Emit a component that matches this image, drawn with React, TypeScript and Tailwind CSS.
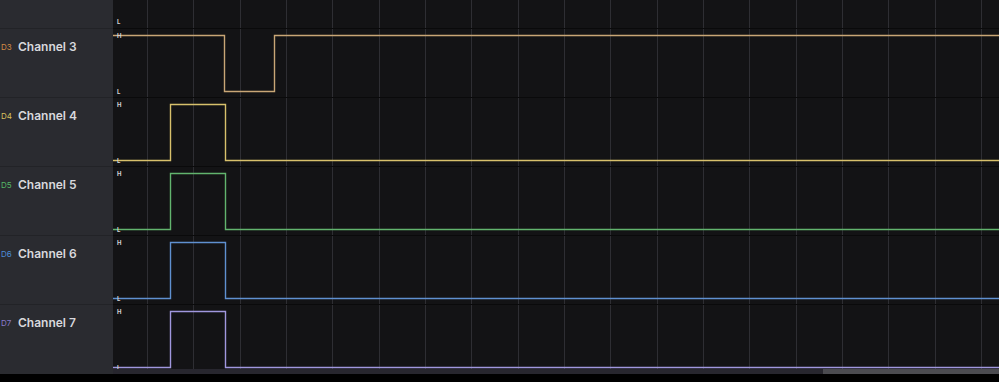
import React from 'react';

type Channel = {
  id: string;
  name: string;
  tag: string;
  line: string;
  // [x, level] pairs, level 1 = high, 0 = low
  edges: [number, number][];
};

const channels: Channel[] = [
  { id: 'D3', name: 'Channel 3', tag: 'text-[#d38b45]', line: '#c9a676', edges: [[0, 1], [111, 0], [161, 1]] },
  { id: 'D4', name: 'Channel 4', tag: 'text-[#d9c25e]', line: '#d8c16c', edges: [[0, 0], [57, 1], [112, 0]] },
  { id: 'D5', name: 'Channel 5', tag: 'text-[#55b866]', line: '#62b46e', edges: [[0, 0], [57, 1], [112, 0]] },
  { id: 'D6', name: 'Channel 6', tag: 'text-[#4d8bd6]', line: '#5f90d0', edges: [[0, 0], [57, 1], [112, 0]] },
  { id: 'D7', name: 'Channel 7', tag: 'text-[#8a7ccc]', line: '#a097de', edges: [[0, 0], [57, 1], [112, 0]] },
];

const W = 886;
const ROW = 69;
const FIRST = 29;
const HI = 6.5;
const LO = 62.5;
const gridXs = Array.from({ length: 19 }, (_, i) => 34 + i * 46.33);

function wavePath(edges: [number, number][], top: number) {
  const y = (lvl: number) => top + (lvl ? HI : LO);
  let d = `M0 ${y(edges[0][1])}`;
  for (let i = 1; i < edges.length; i++) {
    const [x, lvl] = edges[i];
    d += ` H${x + 0.5} V${y(lvl)}`;
  }
  return d + ` H${W}`;
}

const labelProps = { fontSize: 6, fontWeight: 700, fill: '#d4d4d8', fontFamily: 'Inter, sans-serif' };

function Chart() {
  return (
    <svg width={W} height={374} className="block">
      <rect width={W} height={374} fill="#131315" />
      {gridXs.map((x) => (
        <line key={x} x1={Math.round(x) + 0.5} x2={Math.round(x) + 0.5} y1={0} y2={374} stroke="#2e2e33" shapeRendering="crispEdges" />
      ))}
      {[FIRST, FIRST + ROW, FIRST + ROW * 2, FIRST + ROW * 3, FIRST + ROW * 4].map((y) => (
        <line key={y} x1={0} x2={W} y1={y - 0.5} y2={y - 0.5} stroke="#0a0a0b" shapeRendering="crispEdges" />
      ))}
      {/* partial channel 2 */}
      <text x={4} y={24} {...labelProps}>L</text>
      {channels.map((c, i) => {
        const top = FIRST + i * ROW;
        return (
          <g key={c.id}>
            <path d={wavePath(c.edges, top)} fill="none" stroke={c.line} strokeWidth={1.4} />
            <text x={4} y={top + HI + 2} {...labelProps}>H</text>
            <text x={4} y={top + LO + 2} {...labelProps}>L</text>
          </g>
        );
      })}
    </svg>
  );
}

export default function App() {
  return (
    <div className="w-[999px] h-[382px] bg-black overflow-hidden font-['Inter',sans-serif]">
      <div className="flex h-[374px]">
        {/* Channel labels */}
        <div className="w-[113px] shrink-0 bg-[#2a2b30] flex flex-col">
          <div className="h-[29px] border-b border-[#222327]" />
          {channels.map((c) => (
            <div key={c.id} className="h-[69px] border-b border-[#222327] last:border-b-0 flex items-start pt-[12px]">
              <span className={`w-[18px] pl-[1px] text-[8px] leading-[12px] ${c.tag}`}>{c.id}</span>
              <span className="text-[12px] leading-[12px] font-semibold text-[#d8d8dc]">{c.name}</span>
            </div>
          ))}
        </div>

        {/* Waveforms */}
        <div className="relative flex-1">
          <Chart />
          <div className="absolute left-0 right-0 bottom-0 h-[5px] flex">
            <div className="flex-1 bg-[#27262e]" />
            <div className="w-[176px] bg-[#4b4b50]" />
          </div>
        </div>
      </div>
    </div>
  );
}
